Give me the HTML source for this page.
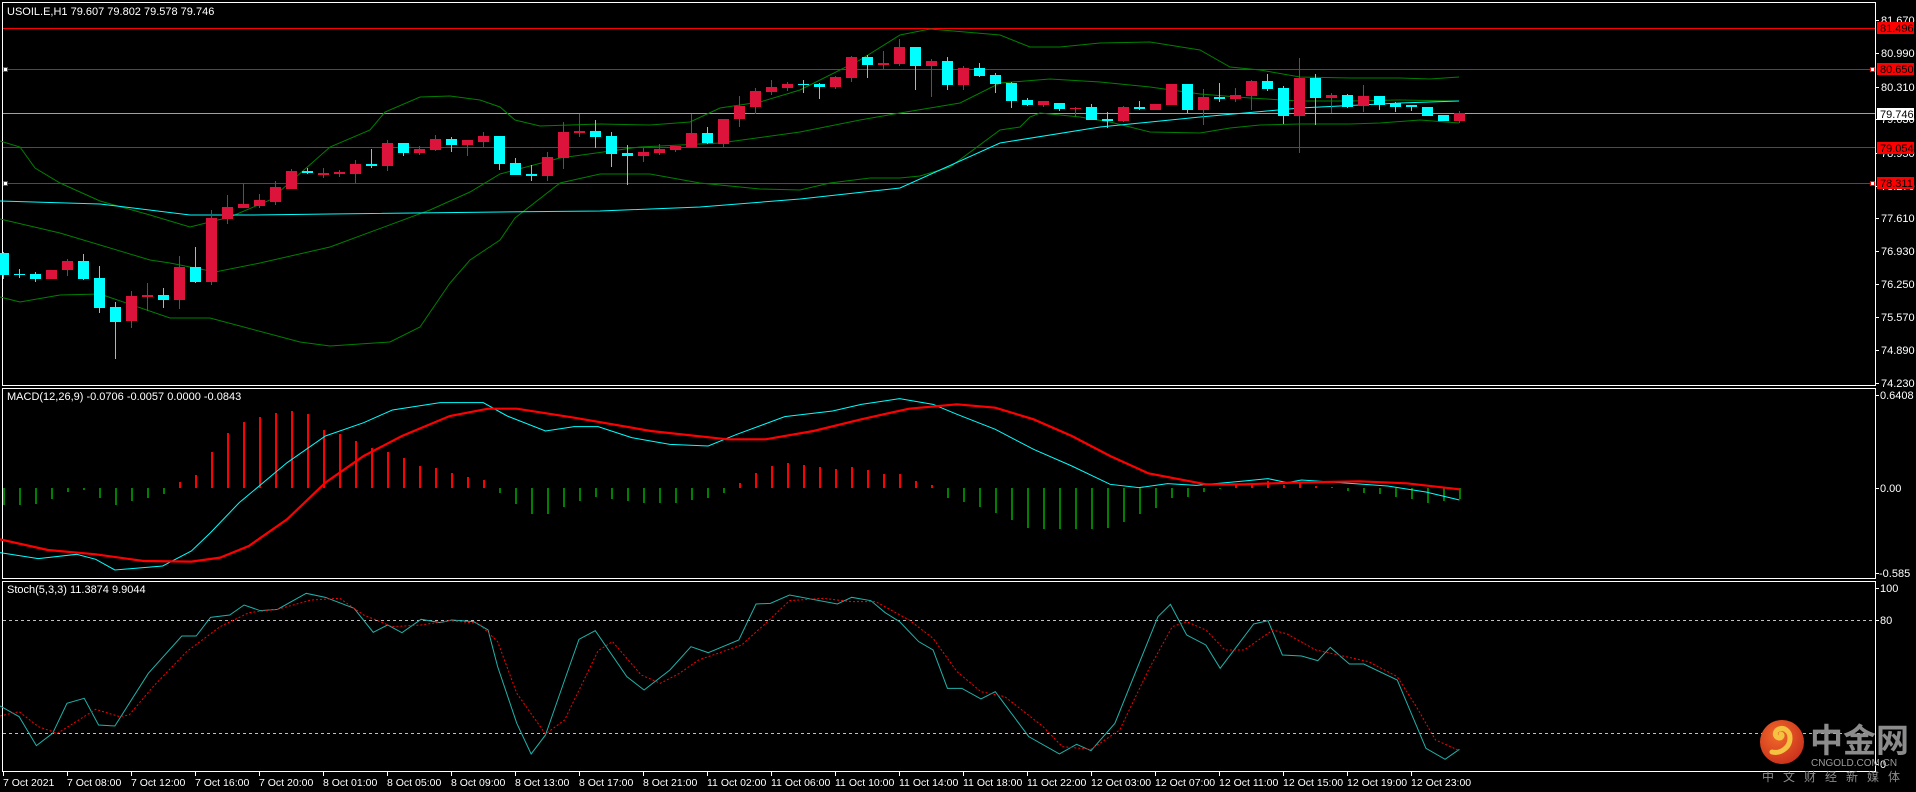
<!DOCTYPE html>
<html><head><meta charset="utf-8"><style>
html,body{margin:0;padding:0;background:#000;}
svg{display:block;}
text{font-family:"Liberation Sans","Noto Sans CJK SC",sans-serif;}
</style></head><body>
<svg width="1916" height="792" viewBox="0 0 1916 792" xmlns="http://www.w3.org/2000/svg">
<rect width="1916" height="792" fill="#000"/>
<!-- panel borders -->
<g fill="none" stroke="#fff" stroke-width="1">
<rect x="2.5" y="2.5" width="1873" height="383"/>
<rect x="2.5" y="388.5" width="1873" height="190"/>
<rect x="2.5" y="581.5" width="1873" height="190"/>
</g>
<!-- horizontal lines -->
<g stroke="#ff0000" stroke-width="1">
<path d="M3 28.5H1875M3 69.5H1875M3 147.5H1875M3 183.5H1875"/>
</g>
<path d="M3 113.5H1875" stroke="#a0a0a0"/>
<g fill="#fff" stroke="#ff0000"><rect x="3.5" y="67.5" width="4" height="4"/><rect x="3.5" y="181.5" width="4" height="4"/><rect x="1870.5" y="67.5" width="4" height="4"/><rect x="1870.5" y="181.5" width="4" height="4"/></g>

<!-- Bollinger -->
<g fill="none" stroke="#008000" stroke-width="1">
<polyline points="0,141 20,147 35,168 60,183 100,201 150,215 190,227 230,217 270,200 330,147 370,130 385,112 420,97 450,96 480,100 500,107 515,120 540,126 600,124 650,125 690,122 720,108 760,102 800,90 860,60 900,35 930,29 1000,35 1030,47 1060,47 1100,43 1150,42 1200,50 1230,67 1260,70 1300,77 1350,78 1400,78 1430,79 1459,77"/>
<polyline points="0,219 60,233 150,260 170,263 215,272 260,263 330,247 430,210 470,192 500,174 560,158 640,147 720,143 800,132 860,120 900,113 960,103 1000,83 1050,79 1100,82 1150,87 1200,94 1250,98 1300,101 1350,101 1400,100 1459,101"/>
<polyline points="0,297 20,302 60,295 100,294 170,318 210,318 300,342 330,346 390,342 420,327 450,283 470,260 500,240 515,218 560,183 600,174 650,174 700,183 760,189 800,190 830,183 870,178 900,178 920,176 950,167 1000,130 1020,127 1030,117 1040,113 1080,117 1110,122 1150,132 1200,133 1230,128 1260,125 1300,124 1350,124 1380,123 1420,120 1459,123"/>
</g>
<polyline fill="none" stroke="#00ffff" stroke-width="1" points="0,201 100,204 190,215 250,215 330,214 500,212 600,211 700,207 800,199 900,188 1000,143 1100,127 1200,117 1300,108 1400,103 1459,101"/>

<!-- candle wicks -->
<path stroke="#00ffff" stroke-width="1" fill="none" d="M3.5 252V279M19.5 269V278M35.5 272V282M83.5 254V280M99.5 266V313M115.5 302V359M163.5 288V308M195.5 247V283M307.5 168V174M371.5 149V168M403.5 143V156M451.5 137V152M499.5 136V170M515.5 158V175M531.5 165V181M595.5 120V148M611.5 132V167M627.5 145V185M707.5 127V144M803.5 80V93M819.5 83V99M867.5 55V78M915.5 47V90M947.5 57V90M979.5 63V77M995.5 73V93M1011.5 82V108M1027.5 98V106M1059.5 103V111M1091.5 104V120M1107.5 112V128M1139.5 101V110M1187.5 84V113M1219.5 83V102M1267.5 74V91M1283.5 86V124M1315.5 74V125M1347.5 94V108M1379.5 96V110M1395.5 102V112M1411.5 105V111"/>
<path stroke="#dc143c" stroke-width="1" fill="none" d="M67.5 259V276M131.5 291V328M147.5 283V311M179.5 256V309M211.5 210V285M227.5 195V224M243.5 183V208M259.5 194V208M275.5 181V205M291.5 169V189M323.5 168V178M339.5 170V177M355.5 160V183M387.5 140V171M419.5 146V155M435.5 135V151M467.5 140V156M483.5 132V147M547.5 152V181M563.5 122V169M579.5 114V137M643.5 148V162M659.5 144V155M675.5 146V152M691.5 114V147M723.5 119V147M739.5 96V127M755.5 88V114M771.5 80V95M787.5 82V91M835.5 76V89M851.5 56V82M883.5 51V69M899.5 39V66M931.5 59V97M963.5 66V90M1043.5 101V107M1075.5 107V117M1123.5 106V122M1203.5 89V125M1235.5 88V102M1251.5 80V110M1299.5 58V153M1331.5 93V113M1363.5 85V112M1459.5 111V123"/>
<!-- candle bodies -->
<g fill="#00ffff">
<rect x="0" y="253" width="9" height="22"/><rect x="14" y="274" width="11" height="1"/><rect x="30" y="274" width="11" height="5"/><rect x="78" y="261" width="11" height="18"/><rect x="94" y="278" width="11" height="30"/><rect x="110" y="307" width="11" height="15"/><rect x="158" y="295" width="11" height="5"/><rect x="190" y="267" width="11" height="15"/><rect x="302" y="171" width="11" height="2"/><rect x="366" y="164" width="11" height="2"/><rect x="398" y="143" width="11" height="10"/><rect x="446" y="139" width="11" height="6"/><rect x="494" y="136" width="11" height="28"/><rect x="510" y="163" width="11" height="12"/><rect x="526" y="174" width="11" height="2"/><rect x="590" y="131" width="11" height="6"/><rect x="606" y="136" width="11" height="18"/><rect x="622" y="153" width="11" height="3"/><rect x="702" y="133" width="11" height="10"/><rect x="798" y="84" width="11" height="1"/><rect x="814" y="84" width="11" height="3"/><rect x="862" y="57" width="11" height="8"/><rect x="910" y="47" width="11" height="19"/><rect x="942" y="61" width="11" height="24"/><rect x="974" y="68" width="11" height="8"/><rect x="990" y="75" width="11" height="9"/><rect x="1006" y="83" width="11" height="18"/><rect x="1022" y="100" width="11" height="5"/><rect x="1054" y="103" width="11" height="6"/><rect x="1086" y="107" width="11" height="13"/><rect x="1102" y="119" width="11" height="2"/><rect x="1134" y="107" width="11" height="2"/><rect x="1182" y="84" width="11" height="26"/><rect x="1214" y="97" width="11" height="2"/><rect x="1262" y="81" width="11" height="8"/><rect x="1278" y="88" width="11" height="28"/><rect x="1310" y="78" width="11" height="20"/><rect x="1342" y="95" width="11" height="12"/><rect x="1374" y="96" width="11" height="9"/><rect x="1390" y="103" width="11" height="4"/><rect x="1406" y="105" width="11" height="2"/><rect x="1422" y="107" width="11" height="9"/><rect x="1438" y="115" width="11" height="6"/>
</g>
<g fill="#dc143c">
<rect x="46" y="270" width="11" height="9"/><rect x="62" y="261" width="11" height="9"/><rect x="126" y="296" width="11" height="25"/><rect x="142" y="295" width="11" height="2"/><rect x="174" y="267" width="11" height="33"/><rect x="206" y="218" width="11" height="64"/><rect x="222" y="207" width="11" height="12"/><rect x="238" y="204" width="11" height="4"/><rect x="254" y="200" width="11" height="6"/><rect x="270" y="187" width="11" height="15"/><rect x="286" y="171" width="11" height="18"/><rect x="318" y="173" width="11" height="2"/><rect x="334" y="172" width="11" height="2"/><rect x="350" y="164" width="11" height="10"/><rect x="382" y="143" width="11" height="23"/><rect x="414" y="149" width="11" height="4"/><rect x="430" y="139" width="11" height="11"/><rect x="462" y="140" width="11" height="5"/><rect x="478" y="136" width="11" height="6"/><rect x="542" y="157" width="11" height="19"/><rect x="558" y="132" width="11" height="26"/><rect x="574" y="131" width="11" height="2"/><rect x="638" y="152" width="11" height="4"/><rect x="654" y="149" width="11" height="4"/><rect x="670" y="146" width="11" height="4"/><rect x="686" y="133" width="11" height="14"/><rect x="718" y="119" width="11" height="25"/><rect x="734" y="106" width="11" height="13"/><rect x="750" y="91" width="11" height="16"/><rect x="766" y="87" width="11" height="5"/><rect x="782" y="84" width="11" height="4"/><rect x="830" y="77" width="11" height="10"/><rect x="846" y="57" width="11" height="21"/><rect x="878" y="63" width="11" height="2"/><rect x="894" y="47" width="11" height="17"/><rect x="926" y="61" width="11" height="5"/><rect x="958" y="68" width="11" height="17"/><rect x="1038" y="101" width="11" height="4"/><rect x="1070" y="108" width="11" height="1"/><rect x="1118" y="107" width="11" height="14"/><rect x="1150" y="104" width="11" height="6"/><rect x="1166" y="84" width="11" height="21"/><rect x="1198" y="97" width="11" height="13"/><rect x="1230" y="95" width="11" height="4"/><rect x="1246" y="81" width="11" height="15"/><rect x="1294" y="78" width="11" height="38"/><rect x="1326" y="95" width="11" height="3"/><rect x="1358" y="96" width="11" height="10"/><rect x="1454" y="113" width="11" height="8"/>
</g>

<!-- price axis -->
<g stroke="#fff"><path d="M1875 20.5h4M1875 53.5h4M1875 87.5h4M1875 119.5h4M1875 153.5h4M1875 186.5h4M1875 218.5h4M1875 251.5h4M1875 284.5h4M1875 317.5h4M1875 350.5h4M1875 383.5h4M1875 395.5h4M1875 488.5h4M1875 573.5h4M1875 588.5h4M1875 620.5h4M1875 764.5h4"/></g>
<g fill="#fff" font-size="11">
<text x="1881" y="24">81.670</text><text x="1881" y="57">80.990</text><text x="1881" y="91">80.310</text><text x="1881" y="123">79.630</text><text x="1881" y="157">78.950</text><text x="1881" y="190">78.270</text><text x="1881" y="222">77.610</text><text x="1881" y="255">76.930</text><text x="1881" y="288">76.250</text><text x="1881" y="321">75.570</text><text x="1881" y="354">74.890</text><text x="1881" y="387">74.230</text>
<text x="1880" y="399">0.6408</text><text x="1880" y="492">0.00</text><text x="1879" y="577">-0.585</text>
<text x="1880" y="592">100</text><text x="1880" y="624">80</text><text x="1880" y="768">0</text>
</g>
<g font-size="11">
<rect x="1877" y="22" width="37" height="12" fill="#ff0000"/><text x="1880" y="32" fill="#000">81.496</text>
<rect x="1877" y="63" width="37" height="12" fill="#ff0000"/><text x="1880" y="73" fill="#000">80.650</text>
<rect x="1877" y="108" width="37" height="12" fill="#fff"/><text x="1880" y="118" fill="#000">79.746</text>
<rect x="1877" y="142" width="37" height="12" fill="#ff0000"/><text x="1880" y="152" fill="#000">79.054</text>
<rect x="1877" y="177" width="37" height="12" fill="#ff0000"/><text x="1880" y="187" fill="#000">78.311</text>
</g>
<g fill="#fff" font-size="11">
<text x="7" y="15">USOIL.E,H1  79.607 79.802 79.578 79.746</text>
<text x="7" y="400">MACD(12,26,9) -0.0706 -0.0057 0.0000 -0.0843</text>
<text x="7" y="593">Stoch(5,3,3) 11.3874 9.9044</text>
</g>

<!-- MACD histogram -->
<g stroke="#008000" stroke-width="2">
<path d="M4 488V505M20 488V505M36 488V504M52 488V499M68 488V492M84 488V490M100 488V498M116 488V505M132 488V501M148 488V498M164 488V494M500 488V493M516 488V504M532 488V514M548 488V514M564 488V507M580 488V501M596 488V497M612 488V499M628 488V501M644 488V503M660 488V503M676 488V503M692 488V500M708 488V498M724 488V493M948 488V498M964 488V502M980 488V507M996 488V513M1012 488V520M1028 488V528M1044 488V529M1060 488V529M1076 488V529M1092 488V529M1108 488V528M1124 488V522M1140 488V514M1156 488V508M1172 488V498M1188 488V497M1204 488V492M1220 488V489M1348 488V491M1364 488V493M1380 488V494M1396 488V497M1412 488V499M1428 488V503M1444 488V501M1460 488V499"/>
</g>
<g stroke="#ff0000" stroke-width="2">
<path d="M180 488V482M196 488V475M212 488V452M228 488V433M244 488V422M260 488V417M276 488V413M292 488V411M308 488V414M324 488V430M340 488V434M356 488V441M372 488V448M388 488V452M404 488V458M420 488V466M436 488V468M452 488V473M468 488V477M484 488V480M740 488V483M756 488V473M772 488V466M788 488V463M804 488V465M820 488V467M836 488V469M852 488V467M868 488V470M884 488V474M900 488V474M916 488V481M932 488V485M1236 488V485M1252 488V483M1268 488V481M1284 488V485M1300 488V483M1316 488V486M1332 488V487"/>
</g>
<g transform="translate(0,386) scale(0.957,0.3333)">
<polyline vector-effect="non-scaling-stroke" fill="none" stroke="#00ffff" stroke-width="1" points="0,500 40,518 80,505 100,520 120,552 170,540 200,495 220,440 250,350 300,230 340,150 380,110 410,72 460,50 505,50 530,90 570,135 600,122 625,122 660,155 700,175 740,180 770,145 820,92 870,75 900,55 940,38 975,55 1000,85 1040,130 1080,190 1120,240 1160,295 1190,305 1220,293 1250,298 1300,285 1325,278 1345,290 1360,282 1400,290 1450,300 1490,318 1525,342"/>
<polyline vector-effect="non-scaling-stroke" fill="none" stroke="#ff0000" stroke-width="2.2" points="0,460 50,492 100,505 150,525 200,527 230,515 260,480 300,400 340,290 380,210 420,150 470,90 510,68 540,68 600,95 680,135 760,160 800,160 850,135 900,100 950,68 1000,55 1040,65 1080,100 1120,150 1160,210 1200,262 1260,295 1300,295 1350,290 1420,286 1470,292 1525,310"/>
</g>

<!-- Stoch -->
<g stroke="#c0c0c0" stroke-dasharray="3,3" stroke-width="1"><path d="M3 620.5H1875M3 733.5H1875"/></g>
<g transform="translate(0,580) scale(0.957,0.3333)">
<polyline vector-effect="non-scaling-stroke" fill="none" stroke="#20b2aa" stroke-width="1" points="0,378 20,410 38,497 55,460 70,370 88,355 103,435 120,438 155,280 190,168 205,168 220,112 240,105 255,75 272,92 290,88 320,40 340,52 370,85 390,157 405,135 420,158 440,118 460,128 472,120 495,125 510,150 520,260 540,430 555,522 570,465 590,300 605,178 622,152 655,290 673,330 700,270 722,200 740,218 772,180 790,72 805,70 825,45 875,72 890,52 910,62 925,98 940,125 960,185 975,210 990,325 1005,325 1025,357 1040,335 1075,470 1107,522 1125,493 1140,512 1165,430 1210,110 1223,73 1240,165 1260,195 1275,265 1310,132 1325,122 1340,225 1360,228 1377,242 1390,202 1410,252 1425,252 1460,300 1490,505 1510,538 1525,508"/>
<polyline vector-effect="non-scaling-stroke" fill="none" stroke="#ff0000" stroke-width="1" stroke-dasharray="2,2" points="0,408 20,395 40,440 60,460 100,388 125,410 135,405 160,320 195,215 230,140 260,98 290,88 325,60 355,55 380,105 410,140 440,135 470,122 500,130 520,185 540,340 570,462 590,420 625,212 640,185 670,285 690,310 710,280 730,240 775,195 800,130 825,62 860,55 890,65 915,65 950,120 975,175 1000,275 1025,335 1050,350 1090,440 1110,500 1140,508 1170,450 1200,270 1225,140 1240,125 1260,150 1280,210 1300,210 1330,150 1345,162 1375,210 1430,245 1460,290 1480,380 1500,480 1525,512"/>
</g>

<!-- time axis -->
<g stroke="#fff"><path d="M3.5 772v4M67.5 772v4M131.5 772v4M195.5 772v4M259.5 772v4M323.5 772v4M387.5 772v4M451.5 772v4M515.5 772v4M579.5 772v4M643.5 772v4M707.5 772v4M771.5 772v4M835.5 772v4M899.5 772v4M963.5 772v4M1027.5 772v4M1091.5 772v4M1155.5 772v4M1219.5 772v4M1283.5 772v4M1347.5 772v4M1411.5 772v4"/></g>
<g fill="#fff" font-size="10.5">
<text x="3" y="786">7 Oct 2021</text><text x="67" y="786">7 Oct 08:00</text><text x="131" y="786">7 Oct 12:00</text><text x="195" y="786">7 Oct 16:00</text><text x="259" y="786">7 Oct 20:00</text><text x="323" y="786">8 Oct 01:00</text><text x="387" y="786">8 Oct 05:00</text><text x="451" y="786">8 Oct 09:00</text><text x="515" y="786">8 Oct 13:00</text><text x="579" y="786">8 Oct 17:00</text><text x="643" y="786">8 Oct 21:00</text><text x="707" y="786">11 Oct 02:00</text><text x="771" y="786">11 Oct 06:00</text><text x="835" y="786">11 Oct 10:00</text><text x="899" y="786">11 Oct 14:00</text><text x="963" y="786">11 Oct 18:00</text><text x="1027" y="786">11 Oct 22:00</text><text x="1091" y="786">12 Oct 03:00</text><text x="1155" y="786">12 Oct 07:00</text><text x="1219" y="786">12 Oct 11:00</text><text x="1283" y="786">12 Oct 15:00</text><text x="1347" y="786">12 Oct 19:00</text><text x="1411" y="786">12 Oct 23:00</text>
</g>

<!-- watermark logo -->
<defs><radialGradient id="lg" cx="0.4" cy="0.35" r="0.7"><stop offset="0" stop-color="#f26a2a"/><stop offset="1" stop-color="#c9301c"/></radialGradient></defs>
<circle cx="1782" cy="742" r="22" fill="url(#lg)"/>
<path d="M1772 752c8 2 18-4 18-14c0-7-6-11-11-9c-5 2-5 8 0 9c3 0 4-3 2-4" fill="none" stroke="#f5c342" stroke-width="5" stroke-linecap="round"/>
<text x="1810" y="752" font-size="33" font-weight="bold" fill="#8c8c8c" font-family="'Noto Sans CJK SC',sans-serif">中金网</text>
<text x="1811" y="766" font-size="10" fill="#9a9a9a">CNGOLD.COM.CN</text>
<text x="1762" y="781" font-size="12" fill="#8c8c8c" letter-spacing="9" font-family="'Noto Sans CJK SC',sans-serif">中文财经新媒体</text>
</svg>
</body></html>
